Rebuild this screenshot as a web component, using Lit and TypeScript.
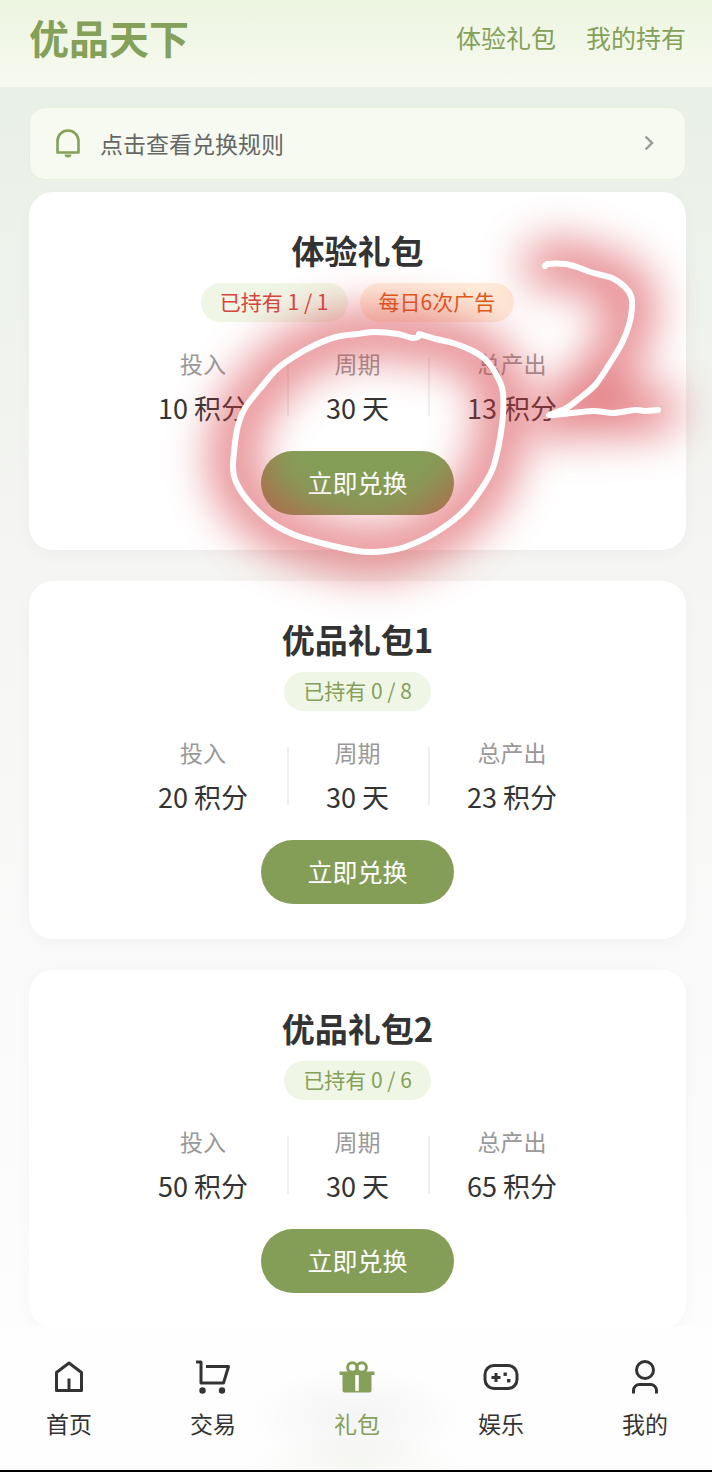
import { LitElement, html, svg, css } from "lit";
import { customElement, property } from "lit/decorators.js";
import { classMap } from "lit/directives/class-map.js";

type Point = [number, number];

interface Pack {
  name: string;
  held: number;
  limit: number;
  tag?: string;
  cost: number;
  days: number;
  total: number;
}

const PACKS: Pack[] = [
  { name: "体验礼包", held: 1, limit: 1, tag: "每日6次广告", cost: 10, days: 30, total: 13 },
  { name: "优品礼包1", held: 0, limit: 8, cost: 20, days: 30, total: 23 },
  { name: "优品礼包2", held: 0, limit: 6, cost: 50, days: 30, total: 65 },
];

const LOOP: Point[] = [
  [419, 334], [436, 339], [453, 343], [473, 351], [487, 361], [498, 378], [503, 393], [502, 425],
  [494, 465], [484, 485], [465, 510], [435, 533], [405, 547], [386, 551], [372, 552], [357, 551],
  [325, 544], [295, 535], [272, 523], [250, 503], [236, 482], [233, 465], [237, 430], [245, 408],
  [263, 385], [277, 369], [295, 356], [315, 345], [336, 337], [357, 334], [375, 332], [398, 334], [412, 338], [418, 337],
];

const TWO: Point[] = [
  [545, 266], [548, 264], [565, 264], [577, 267], [590, 272], [612, 278], [625, 287], [631, 296],
  [632, 308], [629, 325], [622, 343], [612, 360], [596, 384], [580, 398], [565, 409], [549, 415],
  [563, 414], [593, 411], [613, 413], [635, 410], [645, 411], [658, 410],
];

/** Smooth curve through every point of a pen stroke. */
function curve(points: Point[]): string {
  let d = `M${points[0][0]} ${points[0][1]}`;
  for (let i = 0; i < points.length - 1; i++) {
    const p0 = points[Math.max(i - 1, 0)];
    const p1 = points[i];
    const p2 = points[i + 1];
    const p3 = points[Math.min(i + 2, points.length - 1)];
    const k = 7;
    d += `C${p1[0] + (p2[0] - p0[0]) / k} ${p1[1] + (p2[1] - p0[1]) / k} ${p2[0] - (p3[0] - p1[0]) / k} ${p2[1] - (p3[1] - p1[1]) / k} ${p2[0]} ${p2[1]}`;
  }
  return d;
}

const ICONS = {
  home: svg`<path d="M5.500 13.500 18 4l12.500 9.500V31.500h-25zM18 31V19.500" fill="none" stroke="currentColor" stroke-width="3" stroke-linejoin="round"/>`,
  cart: svg`<path d="M1 3h5v21h22.500l5-16.500H11" fill="none" stroke="currentColor" stroke-width="3" stroke-linejoin="round"/><circle cx="7.500" cy="31.500" r="3.200" fill="currentColor"/><circle cx="27" cy="31.500" r="3.200" fill="currentColor"/>`,
  gift: svg`<circle cx="13.300" cy="8.500" r="4.700" fill="none" stroke="currentColor" stroke-width="3"/><circle cx="22.700" cy="8.500" r="4.700" fill="none" stroke="currentColor" stroke-width="3"/><path d="M.5 12.500h35v3.500h-3v15.500a2 2 0 0 1-2 2h-25a2 2 0 0 1-2-2v-15.500h-3z" fill="currentColor"/><path d="M18 16v16" stroke="#fff" stroke-width="3.500"/>`,
  game: svg`<rect x="2" y="6.500" width="32" height="23" rx="9" fill="none" stroke="currentColor" stroke-width="3"/><path d="M8.500 18.500h9M13 14v9" stroke="currentColor" stroke-width="3"/><rect x="20.500" y="13.500" width="3.400" height="3.400" fill="currentColor"/><rect x="24" y="20" width="3.400" height="3.400" fill="currentColor"/>`,
  user: svg`<circle cx="18" cy="11" r="8.500" fill="none" stroke="currentColor" stroke-width="3"/><path d="M6.500 34.500v-3a6 6 0 0 1 6-6h11a6 6 0 0 1 6 6v3" fill="none" stroke="currentColor" stroke-width="3"/>`,
};

const TABS = [
  { icon: ICONS.home, label: "首页" },
  { icon: ICONS.cart, label: "交易" },
  { icon: ICONS.gift, label: "礼包", active: true },
  { icon: ICONS.game, label: "娱乐" },
  { icon: ICONS.user, label: "我的" },
];

@customElement("gift-card")
class GiftCard extends LitElement {
  @property({ attribute: false }) pack!: Pack;

  static styles = css`
    :host {
      display: block;
    }
    .card {
      display: flex;
      flex-direction: column;
      align-items: center;
      padding: 35px 16px;
      background: #fff;
      border-radius: 24px;
      box-shadow: 0 4px 16px rgba(0, 0, 0, 0.03);
    }
    .name {
      margin: 0;
      font-size: 33px;
      line-height: 46px;
      font-weight: 700;
      color: #333;
    }
    .badges {
      display: flex;
      gap: 12px;
      margin-top: 10px;
    }
    .badge {
      padding: 0 19px 2px;
      border-radius: 20px;
      font-size: 21px;
      line-height: 37px;
      color: #84a059;
      background: #eff6e6;
    }
    .full {
      color: #d9443c;
    }
    .tag {
      color: #dd5a16;
      background: #ffeddb;
    }
    .stats {
      display: flex;
      margin: 24px 0 0;
    }
    .stat {
      display: flex;
      flex-direction: column;
      align-items: center;
      padding: 0 39px;
    }
    .stat + .stat {
      background: linear-gradient(#efefef, #efefef) 0 12px / 2px 58px no-repeat;
    }
    .label {
      font-size: 23px;
      line-height: 34px;
      color: #999;
    }
    .value {
      margin: 8px 0 0;
      font-size: 27px;
      line-height: 40px;
      color: #333;
    }
    .buy {
      margin-top: 23px;
      height: 64px;
      padding: 0 46px 2px;
      border: 0;
      border-radius: 32px;
      background: #849e58;
      color: #fff;
      font: inherit;
      font-size: 25px;
      line-height: 36px;
    }
  `;

  render() {
    const p = this.pack;
    return html`
      <article class="card">
        <h2 class="name">${p.name}</h2>
        <div class="badges">
          <span class=${classMap({ badge: true, full: p.held >= p.limit })}>已持有 ${p.held} / ${p.limit}</span>
          ${p.tag ? html`<span class="badge tag">${p.tag}</span>` : ""}
        </div>
        <dl class="stats">
          <div class="stat"><dt class="label">投入</dt><dd class="value">${p.cost} 积分</dd></div>
          <div class="stat"><dt class="label">周期</dt><dd class="value">${p.days} 天</dd></div>
          <div class="stat"><dt class="label">总产出</dt><dd class="value">${p.total} 积分</dd></div>
        </dl>
        <button class="buy" type="button">立即兑换</button>
      </article>
    `;
  }
}

@customElement("app-root")
class AppRoot extends LitElement {
  static styles = css`
    :host {
      display: block;
      position: relative;
      min-height: 100vh;
      overflow: hidden;
      font-family: "Noto Sans CJK SC", "Noto Sans", sans-serif;
      color: #333;
      background: linear-gradient(#e9f0e7 87px, #f5f5f3 560px, #fafafa 1000px, #fdfdfd 1330px);
    }
    .header {
      display: flex;
      align-items: center;
      justify-content: space-between;
      box-sizing: border-box;
      height: 87px;
      padding: 0 26px 14px 29px;
      background: linear-gradient(#ecf5e0, #f7faf0);
      color: #84a059;
    }
    .brand {
      margin: 0;
      font-size: 40px;
      line-height: 58px;
      font-weight: 700;
    }
    .links {
      display: flex;
      gap: 30px;
    }
    .link {
      font-size: 25px;
      line-height: 36px;
      color: inherit;
      text-decoration: none;
    }
    .content {
      display: flex;
      flex-direction: column;
      padding: 20px 26px 144px 29px;
    }
    .notice {
      display: flex;
      align-items: center;
      gap: 17px;
      height: 73px;
      padding: 0 21px 2px 23px;
      border: 1px solid #e8efdb;
      border-radius: 16px;
      box-sizing: border-box;
      background: #f7faf0;
      color: #666;
      font: inherit;
      font-size: 23px;
      line-height: 34px;
      text-align: left;
    }
    .bell {
      width: 30px;
      height: 30px;
      color: #84a059;
    }
    .rule {
      flex: 1;
    }
    .arrow {
      width: 30px;
      height: 30px;
      color: #999;
    }
    .cards {
      display: grid;
      gap: 31px;
      margin-top: 12px;
    }
    .tabbar {
      position: fixed;
      left: 0;
      right: 0;
      bottom: 0;
      display: flex;
      justify-content: space-between;
      box-sizing: border-box;
      height: 146px;
      padding: 33px 44px 0 46px;
      border-bottom: 2px solid #000;
      background:
        radial-gradient(ellipse 108px 52px at 50% 92px, rgba(0, 0, 0, 0.04), rgba(0, 0, 0, 0.025) 45%, rgba(0, 0, 0, 0.006) 80%, transparent),
        radial-gradient(ellipse 110px 40px at 50% 100%, rgba(132, 160, 89, 0.07), transparent),
        #fefefe;
    }
    .tab {
      display: flex;
      flex-direction: column;
      align-items: center;
      gap: 11px;
      color: #333;
      font-size: 23px;
      line-height: 34px;
      text-decoration: none;
    }
    .active {
      color: #84a059;
    }
    .icon {
      width: 36px;
      height: 36px;
    }
    .ink {
      position: absolute;
      left: 0;
      top: 0;
      width: 712px;
      height: 660px;
      pointer-events: none;
    }
    .glow,
    .pen {
      fill: none;
      stroke-linecap: round;
      stroke-linejoin: round;
    }
    .glow {
      stroke: #d63c44;
      stroke-width: 42px;
      opacity: 0.68;
      filter: blur(23px);
    }
    .pen {
      stroke: #fff;
      stroke-width: 6px;
    }
  `;

  render() {
    return html`
      <header class="header">
        <h1 class="brand">优品天下</h1>
        <nav class="links">
          <a class="link" href="#trial">体验礼包</a>
          <a class="link" href="#mine">我的持有</a>
        </nav>
      </header>
      <main class="content">
        <button class="notice" type="button">
          <svg class="bell" viewBox="0 0 30 30" aria-hidden="true">
            <path d="M4.500 24.500V13a10.500 10.500 0 0 1 21 0v11.500z" fill="none" stroke="currentColor" stroke-width="2.600" stroke-linejoin="round" />
            <path d="M11.500 26.500h7a3.500 3 0 0 1-7 0z" fill="currentColor" />
          </svg>
          <span class="rule">点击查看兑换规则</span>
          <svg class="arrow" viewBox="0 0 30 30" aria-hidden="true">
            <path d="M11.500 8.500 18 15l-6.500 6.500" fill="none" stroke="currentColor" stroke-width="2.400" />
          </svg>
        </button>
        <section class="cards">${PACKS.map((p) => html`<gift-card .pack=${p}></gift-card>`)}</section>
      </main>
      <nav class="tabbar">
        ${TABS.map(
          (t) => html`<a class=${classMap({ tab: true, active: !!t.active })} href="#tab">
            <svg class="icon" viewBox="0 0 36 36" aria-hidden="true">${t.icon}</svg>
            <span>${t.label}</span>
          </a>`
        )}
      </nav>
      <svg class="ink" viewBox="0 0 712 660" aria-hidden="true">
        <path class="glow" d=${curve(LOOP)} />
        <path class="glow" d=${curve(TWO)} />
        <path class="pen" d=${curve(LOOP)} />
        <path class="pen" d=${curve(TWO)} />
      </svg>
    `;
  }
}
